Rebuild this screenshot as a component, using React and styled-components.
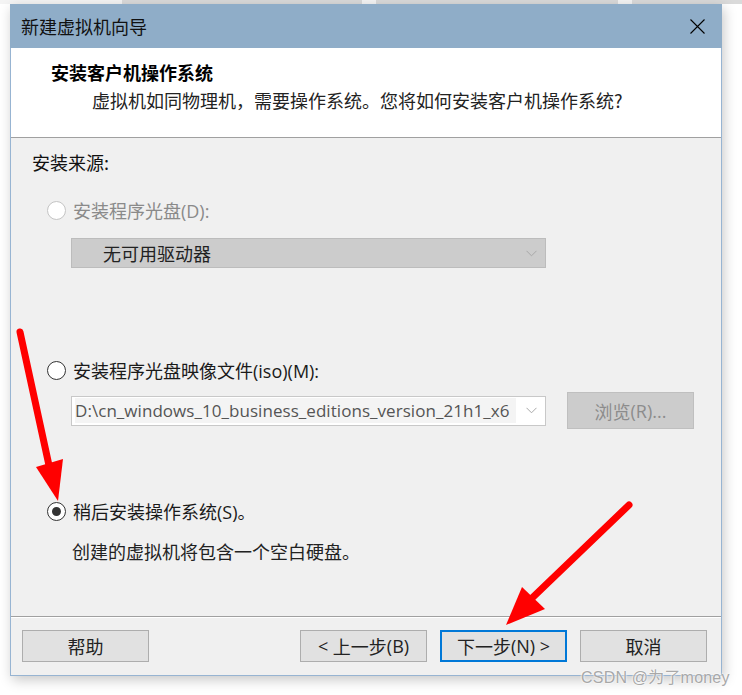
import React from 'react'
import styled, { createGlobalStyle } from 'styled-components'

const GlobalStyle = createGlobalStyle`
  html, body {
    margin: 0;
    padding: 0;
    background: #ffffff;
  }
  body {
    font-family: 'Noto Sans', 'Noto Sans CJK SC', sans-serif;
    font-size: 18px;
    color: #1a1a1a;
  }
`

const Page = styled.div`
  position: relative;
  width: 742px;
  height: 695px;
  overflow: hidden;
  display: flex;
  flex-direction: column;
`

const TopStrip = styled.div`
  display: flex;
  height: 4px;
`

const StripBlock = styled.div`
  width: ${(p) => p.w}px;
  background: ${(p) => (p.grey ? '#dadada' : '#f4f4f4')};
`

const Window = styled.div`
  margin-left: 10px;
  width: 710px;
  height: 671px;
  border: 1px solid #97b4d2;
  border-top: none;
  background: #f0f0f0;
  display: flex;
  flex-direction: column;
  box-shadow: 2px 4px 12px rgba(0, 0, 0, 0.22);
`

const TitleBar = styled.div`
  height: 44px;
  background: #8fadc8;
  display: flex;
  align-items: center;
  justify-content: space-between;
  padding: 0 17px 0 11px;
  margin: 0 -1px;
  font-family: 'Noto Sans CJK SC', sans-serif;
  font-size: 18px;
  color: #111;
`

const Header = styled.div`
  height: 90px;
  background: #ffffff;
  padding: 12px 0 0 40px;
  box-sizing: border-box;
  border-bottom: 1px solid #a0a0a0;
  font-family: 'Noto Sans CJK SC', sans-serif;
`

const HeaderTitle = styled.div`
  font-size: 18px;
  font-weight: 700;
  line-height: 24px;
  color: #000;
`

const HeaderText = styled.div`
  font-size: 18px;
  line-height: 24px;
  margin: 4px 0 0 41px;
  color: #222;
`

const Body = styled.div`
  flex: 1;
  display: flex;
  flex-direction: column;
  padding: 12px 0 0 21px;
  font-family: 'Noto Sans CJK SC', sans-serif;
  border-bottom: 1px solid #a0a0a0;
  box-shadow: 0 1px 0 #ffffff;
`

const SectionLabel = styled.div`
  font-size: 18px;
  line-height: 24px;
  color: #111;
`

const RadioRow = styled.label`
  display: flex;
  align-items: center;
  gap: 7px;
  margin-top: ${(p) => p.mt}px;
  margin-left: 15px;
  height: 24px;
  font-size: 18px;
  color: ${(p) => (p.disabled ? '#8a8a8a' : '#1a1a1a')};
`

const RadioCircle = styled.span`
  width: 17px;
  height: 17px;
  border-radius: 50%;
  border: 1px solid ${(p) => (p.disabled ? '#c4c4c4' : '#333')};
  background: #fff;
  display: flex;
  align-items: center;
  justify-content: center;
  &::after {
    content: '';
    display: ${(p) => (p.checked ? 'block' : 'none')};
    width: 9px;
    height: 9px;
    border-radius: 50%;
    background: #333;
  }
`

const Latin = styled.span`
  font-family: 'Open Sans', 'Noto Sans', sans-serif;
`

const SelectBox = styled.div`
  margin: ${(p) => p.mt}px 0 0 39px;
  width: 475px;
  height: 30px;
  box-sizing: border-box;
  border: 1px solid ${(p) => (p.disabled ? '#bcbcbc' : '#c8c8c8')};
  background: ${(p) => (p.disabled ? '#cccccc' : '#ffffff')};
  display: flex;
  align-items: center;
  padding: 0 8px 0 ${(p) => (p.disabled ? 31 : 3)}px;
  font-size: 18px;
  color: #222;
`

const SelectText = styled.div`
  flex: 1;
  overflow: hidden;
  white-space: nowrap;
  background: ${(p) => (p.path ? '#f4f4f4' : 'transparent')};
  margin-right: 10px;
  font-family: ${(p) => (p.path ? "'Open Sans', sans-serif" : "'Noto Sans CJK SC', sans-serif")};
  color: ${(p) => (p.path ? '#555' : '#222')};
  font-size: ${(p) => (p.path ? 17 : 18)}px;
  letter-spacing: ${(p) => (p.path ? '0.05px' : '0')};
  line-height: 25px;
`

const FileRow = styled.div`
  display: flex;
  align-items: center;
  gap: 21px;
  margin-top: 10px;
`

const FileSelect = styled(SelectBox)`
  margin: 0 0 0 39px;
`

const Button = styled.button`
  width: ${(p) => p.w || 127}px;
  height: 32px;
  box-sizing: border-box;
  border: ${(p) => (p.focused ? '2px solid #0078d7' : '1px solid #adadad')};
  background: ${(p) => (p.disabled ? '#cccccc' : '#e1e1e1')};
  color: ${(p) => (p.disabled ? '#8c8c8c' : '#222')};
  font-family: 'Noto Sans CJK SC', sans-serif;
  font-size: 18px;
  padding: 0;
  display: flex;
  align-items: center;
  justify-content: center;
`

const BrowseButton = styled(Button)`
  height: 37px;
  border-color: #bfbfbf;
`

const Description = styled.div`
  margin: 16px 0 0 40px;
  font-size: 18px;
  line-height: 24px;
  color: #222;
`

const Footer = styled.div`
  height: 58px;
  display: flex;
  align-items: flex-start;
  padding: 13px 14px 0 11px;
  box-sizing: border-box;
  gap: 13px;
`

const Spacer = styled.div`
  flex: 1;
`

const Arrows = styled.svg`
  position: absolute;
  left: 0;
  top: 0;
  pointer-events: none;
`

const Watermark = styled.div`
  position: absolute;
  left: 581px;
  top: 664px;
  font-family: 'Liberation Sans', 'Noto Sans CJK SC', sans-serif;
  font-size: 16px;
  color: #a8a8a8;
  text-shadow: 0 0 2px #fff, 0 0 2px #fff;
  letter-spacing: 0.2px;
`

function Chevron() {
  return (
    <svg width="11" height="7" viewBox="0 0 11 7">
      <path d="M0.5 0.8 L5.5 5.8 L10.5 0.8" fill="none" stroke="#a8a8a8" strokeWidth="1" />
    </svg>
  )
}

function CloseIcon() {
  return (
    <svg width="15" height="15" viewBox="0 0 15 15">
      <path d="M0.5 0.5 L14.5 14.5 M14.5 0.5 L0.5 14.5" stroke="#000" strokeWidth="1.1" />
    </svg>
  )
}

export default function App() {
  return (
    <Page>
      <GlobalStyle />
      <TopStrip>
        <StripBlock w={122} />
        <StripBlock w={240} grey />
        <StripBlock w={14} />
        <StripBlock w={242} grey />
        <StripBlock w={14} />
        <StripBlock w={110} grey />
      </TopStrip>
      <Window>
        <TitleBar>
          <span>新建虚拟机向导</span>
          <CloseIcon />
        </TitleBar>
        <Header>
          <HeaderTitle>安装客户机操作系统</HeaderTitle>
          <HeaderText>虚拟机如同物理机，需要操作系统。您将如何安装客户机操作系统?</HeaderText>
        </Header>
        <Body>
          <SectionLabel>安装来源:</SectionLabel>
          <RadioRow mt={24} disabled>
            <RadioCircle disabled />
            <span>
              安装程序光盘<Latin>(D):</Latin>
            </span>
          </RadioRow>
          <SelectBox mt={16} disabled>
            <SelectText>无可用驱动器</SelectText>
            <Chevron />
          </SelectBox>
          <RadioRow mt={90}>
            <RadioCircle />
            <span>
              安装程序光盘映像文件<Latin>(iso)(M):</Latin>
            </span>
          </RadioRow>
          <FileRow>
            <FileSelect>
              <SelectText path>D:\cn_windows_10_business_editions_version_21h1_x6</SelectText>
              <Chevron />
            </FileSelect>
            <BrowseButton disabled>
              浏览<Latin>(R)...</Latin>
            </BrowseButton>
          </FileRow>
          <RadioRow mt={70}>
            <RadioCircle checked />
            <span>
              稍后安装操作系统<Latin>(S)</Latin>。
            </span>
          </RadioRow>
          <Description>创建的虚拟机将包含一个空白硬盘。</Description>
        </Body>
        <Footer>
          <Button>帮助</Button>
          <Spacer />
          <Button>
            <Latin>&lt;&nbsp;</Latin>上一步<Latin>(B)</Latin>
          </Button>
          <Button focused>
            下一步<Latin>(N)&nbsp;&gt;</Latin>
          </Button>
          <Button>取消</Button>
        </Footer>
      </Window>
      <Arrows width="742" height="695" viewBox="0 0 742 695">
        <line x1="20" y1="332" x2="50" y2="470" stroke="#ff0000" strokeWidth="7" strokeLinecap="round" />
        <polygon points="58,501 36,467 63,459" fill="#ff0000" />
        <line x1="629" y1="505" x2="530" y2="600" stroke="#ff0000" strokeWidth="7" strokeLinecap="round" />
        <polygon points="506,625 522,587 545,609" fill="#ff0000" />
      </Arrows>
      <Watermark>CSDN @为了money</Watermark>
    </Page>
  )
}
